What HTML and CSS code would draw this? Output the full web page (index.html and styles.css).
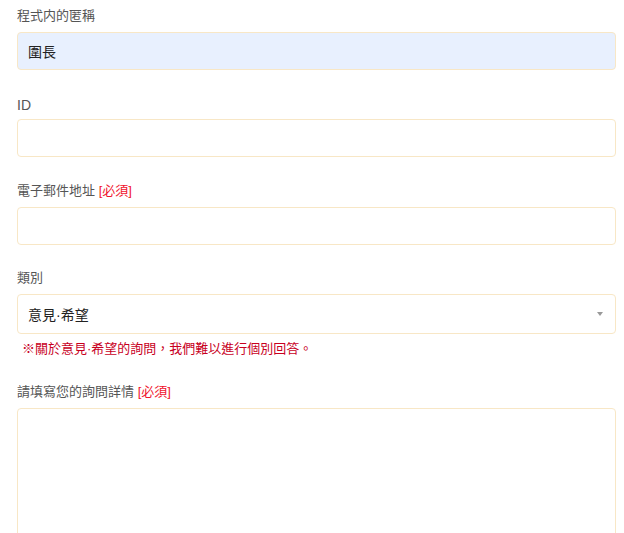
FILE: index.html
```html
<!DOCTYPE html>
<html lang="zh-Hant">

<head>
  <meta charset="UTF-8">
  <meta name="viewport" content="width=device-width, initial-scale=1.0">
  <title>詢問表單</title>
  <link rel="stylesheet" href="styles.css">
</head>

<body>
  <form class="contact-form">
    <div class="field">
      <label for="nickname">程式内的匿稱</label>
      <input type="text" id="nickname" class="text-input filled" value="圍長">
    </div>

    <div class="field field-wide">
      <label for="userId" class="latin">ID</label>
      <input type="text" id="userId" class="text-input">
    </div>

    <div class="field">
      <label for="email">電子郵件地址 <span class="required">[必須]</span></label>
      <input type="email" id="email" class="text-input">
    </div>

    <div class="field field-select">
      <label for="category">類別</label>
      <div class="select-box" id="category">
        <span class="select-value">意見·希望</span>
        <span class="select-arrow"></span>
      </div>
      <p class="note">※關於意見·希望的詢問，我們難以進行個別回答。</p>
    </div>

    <div class="field">
      <label for="detail">請填寫您的詢問詳情 <span class="required">[必須]</span></label>
      <textarea id="detail" class="text-area"></textarea>
    </div>
  </form>
</body>

</html>
```

FILE: styles.css
```css
body {
  font-family: "Liberation Sans", "Noto Sans CJK TC", sans-serif;
  margin: 0;
  padding: 7px 8px 0 17px;
  background: #fff;
}

.contact-form {
  display: flex;
  flex-direction: column;
}

.field {
  display: flex;
  flex-direction: column;
  margin-bottom: 24px;
}

.field-wide {
  margin-bottom: 25px;
}

.field label {
  font-size: 13px;
  line-height: 18px;
  color: #555;
  margin-bottom: 7px;
}

.field label.latin {
  font-size: 14px;
  line-height: 20px;
  margin-top: 1px;
  margin-bottom: 4px;
}

.required {
  color: #f0142d;
}

.text-input,
.select-box,
.text-area {
  box-sizing: border-box;
  width: 100%;
  border: 1px solid #f8e7c6;
  border-radius: 4px;
  background: #fff;
  font-family: inherit;
  font-size: 14px;
  color: #222;
  outline: none;
}

.text-input {
  height: 38px;
  padding: 0 10px;
}

.text-input.filled {
  background: #e8f0fe;
}

.select-box {
  height: 40px;
  display: flex;
  align-items: center;
  justify-content: space-between;
  padding: 0 12px 0 10px;
}

.select-arrow {
  width: 0;
  height: 0;
  border-left: 3px solid transparent;
  border-right: 3px solid transparent;
  border-top: 4px solid #999;
}

.note {
  margin: 6px 0 0 5px;
  font-size: 13px;
  line-height: 18px;
  color: #c8001e;
}

.field-select {
  margin-bottom: 25px;
}

.text-area {
  height: 200px;
  resize: none;
  padding: 10px;
}
```
